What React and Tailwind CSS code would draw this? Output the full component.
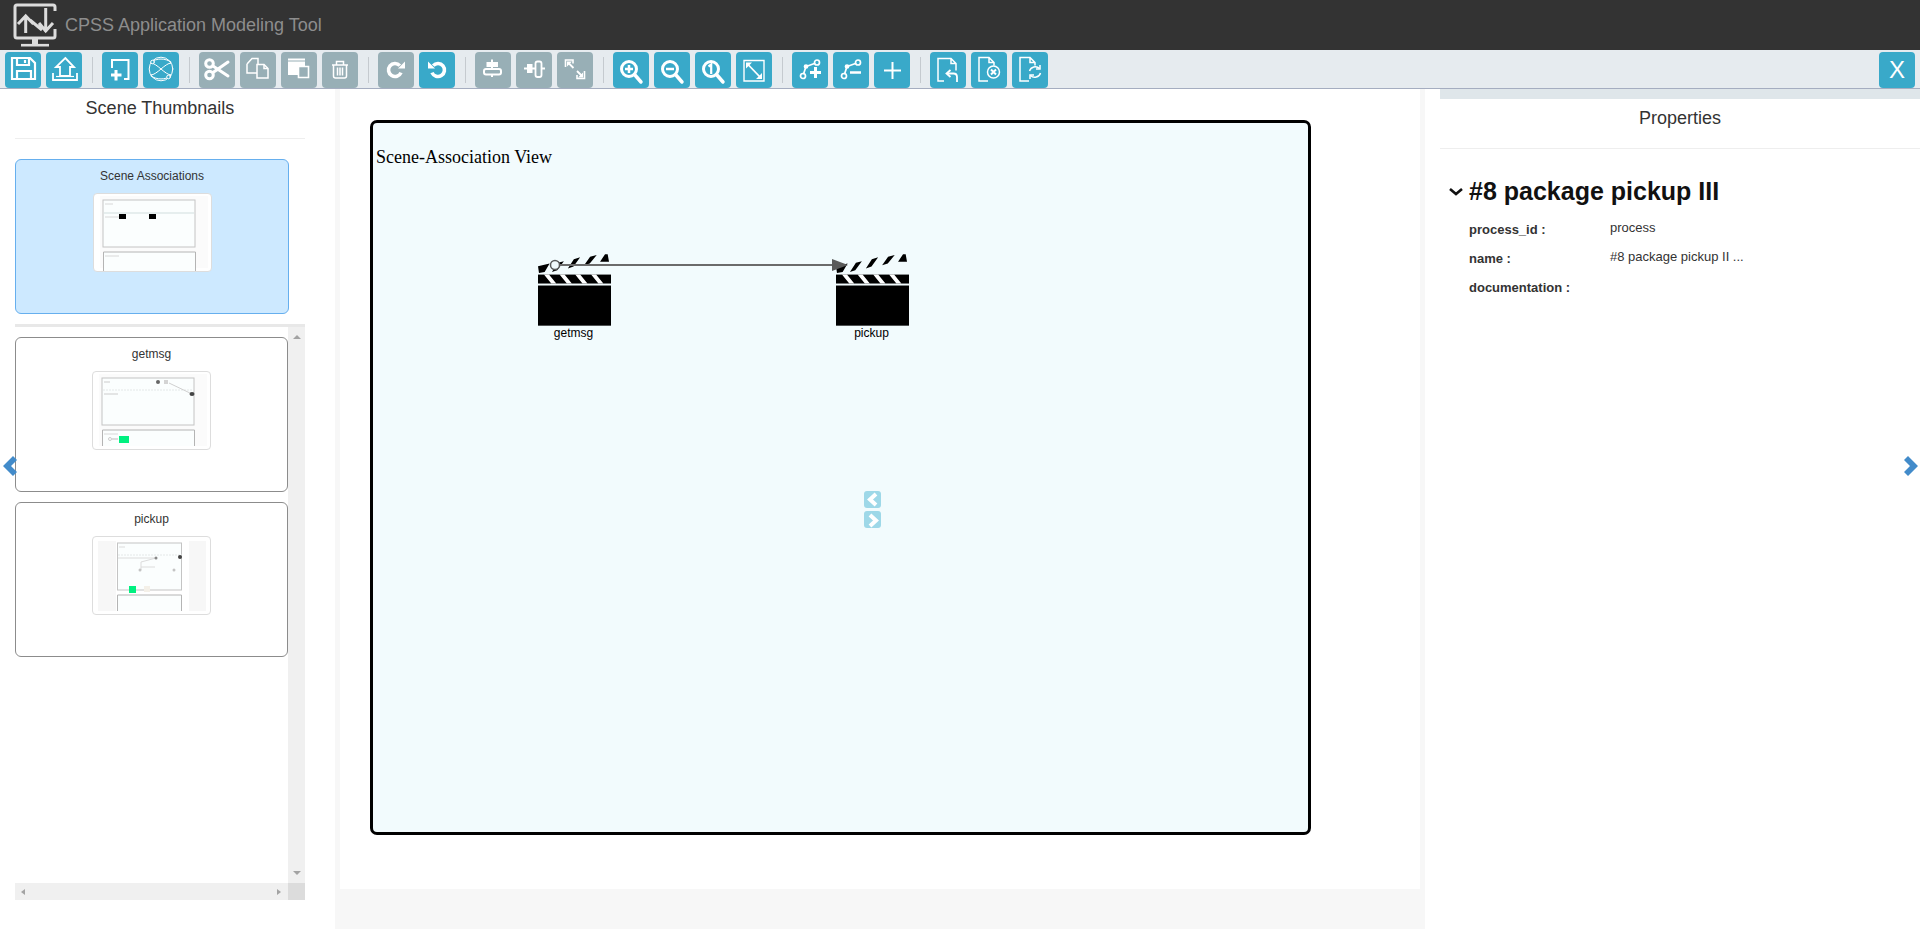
const line = { fill: "none", stroke: "#fff", strokeWidth: 2, strokeLinecap: "round", strokeLinejoin: "round" };
const sharp = { ...line, strokeLinecap: "butt", strokeLinejoin: "miter" };

const Lens = ({ children }) => (
    <g {...line} strokeWidth="3">
        <circle cx="16" cy="17" r="7.500" />
        <path d="M21.500 22.500L28 30" strokeWidth="3.500" />
        {children}
    </g>
);

// toolbar icons are drawn on a 36x36 box
const icons = {
    save: (
        <g {...sharp} strokeWidth="2.200">
            <path d="M7 6h18l5 5v16H7z" />
            <path d="M12 6v7h12V6" />
            <path d="M12 27v-8h14v8" />
            <path d="M20 8v3" />
        </g>
    ),
    upload: (
        <g {...sharp} strokeWidth="1.800">
            <path d="M19.300 6l8.700 9h-4v9H14v-9h-4z" />
            <path d="M7 21v7h24v-7" />
            <path d="M10 24.500h18" strokeWidth="1.200" />
        </g>
    ),
    addScene: (
        <g {...sharp}>
            <path d="M10 16V8h16.500v19H22" />
            <path d="M9 23h10.500M14 18v10.500" strokeWidth="3" />
        </g>
    ),
    sceneLink: (
        <g {...line} strokeWidth="1">
            <circle cx="18" cy="17" r="11.800" />
            <path d="M8 11C14 11 22 23 28 23M28 11C22 11 14 23 8 23" />
            <path d="M8 10c6-4 14-4 20 0M8 24c6 4 14 4 20 0" />
            <circle cx="9.500" cy="10" r="1.800" fill="#39a9c9" />
            <circle cx="25.500" cy="25" r="1.800" fill="#39a9c9" />
        </g>
    ),
    cut: (
        <g {...line} strokeWidth="3">
            <circle cx="10.500" cy="11.500" r="3.800" />
            <circle cx="10.500" cy="23" r="3.800" />
            <path d="M14 14l15 10M14 20.500l15-10.500" />
        </g>
    ),
    copy: (
        <g {...sharp} strokeWidth="1.500">
            <path d="M7 12l5-5.500h6V12M7 12v9h10" />
            <path d="M17 12.500h7l4 4V26H17z" />
            <path d="M24 12.500v4h4" />
        </g>
    ),
    paste: (
        <g>
            <path d="M7 6.500h17V23H7z" fill="#fff" />
            <path d="M7 9h17" stroke="#98afb6" strokeWidth="1" />
            <path d="M17.500 14.500h10v11h-10z" fill="#98afb6" stroke="#fff" strokeWidth="1.600" />
        </g>
    ),
    trash: (
        <g {...sharp} strokeWidth="1.500">
            <path d="M10 13h16M14.500 13v-3.500h7V13" />
            <path d="M11.500 13v11q0 2 2 2h9q2 0 2-2V13" />
            <path d="M15.500 15.500v8M18 15.500v8M20.500 15.500v8" />
        </g>
    ),
    redo: (
        <g>
            <path d="M21.800 13.600a6.500 6.500 0 1 0 1.200 7" {...sharp} strokeWidth="3.600" />
            <path d="M20 16.500h7V9.500z" fill="#fff" />
        </g>
    ),
    undo: (
        <g>
            <path d="M14.200 13.600a6.500 6.500 0 1 1-1.200 7" {...sharp} strokeWidth="3.600" />
            <path d="M16 16.500H9V9.500z" fill="#fff" />
        </g>
    ),
    alignH: (
        <g>
            <path d="M17 7.500V25" {...sharp} stroke="#fff" />
            <rect x="11.500" y="10" width="11.500" height="5" fill="#fff" />
            <rect x="9" y="17" width="17" height="5.500" rx="2" fill="#98afb6" stroke="#fff" strokeWidth="2" />
        </g>
    ),
    alignV: (
        <g>
            <path d="M8 16.500h21" {...sharp} />
            <rect x="11" y="12" width="5.500" height="9" fill="#fff" />
            <rect x="19.500" y="9.500" width="6" height="15.500" rx="2" fill="#98afb6" stroke="#fff" strokeWidth="1.800" />
        </g>
    ),
    resize: (
        <g {...sharp} strokeWidth="1.600">
            <path d="M8.500 15V8h7.500v3.500" />
            <path d="M27.500 19v7.500H20V23" />
            <path d="M11 10.500l5.500 5.500M25 24l-5-5" strokeWidth="1.800" />
            <path d="M10 9.500h5l-5 5zM26 25.500h-5l5-5z" fill="#fff" stroke="none" />
        </g>
    ),
    zoomIn: <Lens><path d="M12 17h8M16 13v8" strokeWidth="2.500" strokeLinecap="butt" /></Lens>,
    zoomOut: <Lens><path d="M12 17h8" strokeWidth="2.500" strokeLinecap="butt" /></Lens>,
    zoomOne: <Lens><path d="M13.500 14.500l2.700-2v9.500" strokeWidth="2.200" strokeLinecap="butt" strokeLinejoin="miter" /></Lens>,
    fit: (
        <g {...sharp}>
            <path d="M8 8.500h20v20.500H8z" strokeWidth="1.400" />
            <path d="M12 12.500l12 12.500" strokeWidth="1.800" />
            <path d="M10 10.500h6l-6 6zM26 27h-6l6-6z" fill="#fff" stroke="none" />
        </g>
    ),
    linkAdd: (
        <g {...line} strokeWidth="1.700">
            <circle cx="25" cy="10.500" r="2.500" />
            <circle cx="11" cy="24" r="2.500" />
            <path d="M22.500 11.500L15.500 14q-1.500.5-2 2l-1.800 5.500" />
            <circle cx="14" cy="14.500" r="1.500" fill="#fff" />
            <path d="M18 20.500h11M23.500 15v11" strokeWidth="3" strokeLinecap="butt" />
        </g>
    ),
    linkRemove: (
        <g {...line} strokeWidth="1.700">
            <circle cx="25" cy="10.500" r="2.500" />
            <circle cx="11" cy="24" r="2.500" />
            <path d="M22.500 11.500L15.500 14q-1.500.5-2 2l-1.800 5.500" />
            <circle cx="14" cy="14.500" r="1.500" fill="#fff" />
            <path d="M17 20.500h11" strokeWidth="2.500" strokeLinecap="butt" />
        </g>
    ),
    plus: <path d="M18.500 10v17M10 18.500h17" {...sharp} />,
    fileBack: (
        <g {...sharp} strokeWidth="1.500">
            <path d="M14 29H8V6.500h13l5 5v7M21 6.500v5h5" />
            <path d="M27 30v-5q0-3.500-3.500-3.500H17" strokeWidth="1.800" />
            <path d="M20.500 18l-4 3.500 4 3.500" strokeWidth="1.800" />
        </g>
    ),
    fileCancel: (
        <g {...sharp} strokeWidth="1.500">
            <path d="M17 29H8V5.500h10l5 5v3M18 5.500v5h5" />
            <circle cx="22.500" cy="20" r="6" />
            <path d="M20 17.500l5 5M25 17.500l-5 5" strokeWidth="2" />
        </g>
    ),
    fileSync: (
        <g {...sharp} strokeWidth="1.500">
            <path d="M17 29H8V5.500h10l5 5v3M18 5.500v5h5" />
            <path d="M17.500 19a6 6 0 0 1 10-2.500M28.500 21a6 6 0 0 1-10 2.500" />
            <path d="M28 13v4h-4M18 27v-4h4" />
        </g>
    ),
};

const toolbar = [
    [["save", 1], ["upload", 1]],
    [["addScene", 1], ["sceneLink", 1]],
    [["cut", 0], ["copy", 0], ["paste", 0], ["trash", 0]],
    [["redo", 0], ["undo", 1]],
    [["alignH", 0], ["alignV", 0], ["resize", 0]],
    [["zoomIn", 1], ["zoomOut", 1], ["zoomOne", 1], ["fit", 1]],
    [["linkAdd", 1], ["linkRemove", 1], ["plus", 1]],
    [["fileBack", 1], ["fileCancel", 1], ["fileSync", 1]],
];

const ToolButton = ({ name, active }) => (
    <button className={`${active ? "bg-[#39a9c9]" : "bg-[#98afb6]"} w-9 h-9 rounded-[4px] shrink-0`}>
        <svg width="36" height="36" viewBox="0 0 36 36">{icons[name]}</svg>
    </button>
);

const Logo = () => (
    <svg width="46" height="48" viewBox="0 0 46 48" className="ml-[12px] shrink-0" fill="none" stroke="#dcdcdc" strokeWidth="3">
        <path d="M43 10V6q0-2-2-2H5Q3 4 3 6v29q0 2 2 2h36q2 0 2-2v-7" />
        <path d="M20 38h6v5h-6z" fill="#dcdcdc" stroke="none" />
        <path d="M9 44.200h28" strokeWidth="2.600" />
        <path d="M6 23l7.700-8 7.700 8M13.700 16v16M18 19l12 10M33.700 7v24M27 22l6.700 8 7.300-8" />
    </svg>
);

const Chevron = ({ flip }) => (
    <svg width="14" height="20" viewBox="0 0 14 20" className={flip ? "rotate-180" : ""}>
        <path d="M0 10L10 0l4 4-6 6 6 6-4 4z" fill="#428bca" />
    </svg>
);

// tiny previews of the scenes
const ThumbAssoc = () => (
    <svg width="118" height="78" viewBox="0 0 118 78" className="blur-[0.5px]">
        <rect x="6" y="2" width="108" height="72" fill="#fbfbfb" />
        <rect x="9" y="6" width="92" height="47" fill="#fbfefe" stroke="#c4c4c4" />
        <path d="M10 19h90" stroke="#e6eeee" strokeWidth="2" />
        <path d="M11 10h8M11 23h14" stroke="#d8d8d8" />
        <rect x="25" y="20" width="7" height="5" fill="#000" />
        <rect x="55" y="20" width="7" height="5" fill="#000" />
        <path d="M9.500 78V58h92v20" fill="#fbfefe" stroke="#b4b4b4" />
        <path d="M11 62h14" stroke="#d8d8d8" />
    </svg>
);

const ThumbGetmsg = () => (
    <svg width="118" height="78" viewBox="0 0 118 78" className="blur-[0.5px]">
        <rect x="6" y="2" width="108" height="72" fill="#fbfbfb" />
        <rect x="9" y="6" width="92" height="47" fill="#fbfefe" stroke="#c4c4c4" />
        <path d="M10 18h90" stroke="#e4e8e8" strokeDasharray="2 1" />
        <path d="M11 10h6M11 22h14" stroke="#ccc" />
        <circle cx="65" cy="10" r="2" fill="#666" />
        <rect x="71" y="8" width="4" height="4" fill="#d4d4d4" />
        <path d="M76 11l23 11" stroke="#d0d0d0" />
        <ellipse cx="99" cy="22" rx="2.500" ry="2" fill="#444" />
        <path d="M9.500 74V58h92v16" fill="#fbfefe" stroke="#b4b4b4" />
        <path d="M11 62h14" stroke="#d8d8d8" />
        <circle cx="17" cy="67" r="1.500" fill="#fff" stroke="#ccc" />
        <path d="M19 67h6" stroke="#bbb" />
        <rect x="26" y="64" width="10" height="7" fill="#00f080" />
    </svg>
);

const ThumbPickup = () => (
    <svg width="118" height="78" viewBox="0 0 118 78" className="blur-[0.5px]">
        <rect x="5" y="4" width="108" height="70" fill="#f7f7f7" />
        <rect x="23" y="4" width="73" height="70" fill="#fff" />
        <rect x="24.500" y="6" width="64" height="47" fill="#fbfefe" stroke="#c4c4c4" />
        <path d="M25 18h64" stroke="#e4e8e8" strokeDasharray="2 1" />
        <path d="M26 10h6M25 21h38M48 33V25L63 21M48 30h14" stroke="#dcdcdc" fill="none" />
        <circle cx="63" cy="21" r="1.500" fill="#888" />
        <circle cx="87" cy="20" r="2" fill="#444" />
        <circle cx="47" cy="33" r="1.500" fill="#c4c4c4" />
        <circle cx="81" cy="33" r="1.500" fill="#c4c4c4" />
        <rect x="36" y="49" width="7" height="7" fill="#00f080" />
        <rect x="51" y="49" width="6" height="6" fill="#f4f0e8" />
        <path d="M24.500 74V58h64v16" fill="#fbfefe" stroke="#b4b4b4" />
    </svg>
);

const SceneCard = ({ title, selected, children, extra = "" }) => (
    <div className={`${selected ? "bg-[#cde9ff] border-[#66afee] w-[274px]" : "bg-white border-[#8c8c8c] w-[273px]"} h-[155px] border rounded-[6px] flex flex-col items-center ${extra}`}>
        <div className="h-[33px] leading-[32px] text-xs text-[#333] w-full text-center">{title}</div>
        <div className="w-[119px] h-[79px] bg-white border border-[#ddd] rounded-[4px] overflow-hidden">{children}</div>
    </div>
);

const Clapper = ({ label, left }) => (
    <div className="absolute top-[131px] w-[73px] flex flex-col items-center" style={{ left }}>
        <svg width="73" height="72" viewBox="0 0 220 215" className="shrink-0">
            <path d="M0 36l35-8-15 25-17 3zM42 53l18-28 18-4-20 27zM90 43l18-28 19-6-20 28zM139 33l18-26 20-5-21 26zM187 22l15-22h8l4 22z" fill="#000" />
            <rect x="0" y="61" width="220" height="27" fill="#000" />
            <path d="M18 61h15l22 27H40zM65 61h15l22 27H87zM112 61h15l22 27h-15zM160 61h15l22 27h-15z" fill="#fff" />
            <rect x="0" y="94" width="220" height="121" fill="#000" />
        </svg>
        <span className="text-xs leading-[14px] text-black pr-[2px]">{label}</span>
    </div>
);

const PropRow = ({ label, value }) => (
    <div className="flex h-[29px] text-[13px] leading-[15px] text-[#333]">
        <div className="w-[141px] font-bold pt-[2px]">{label}</div>
        <div>{value}</div>
    </div>
);

const Triangle = ({ d, className = "" }) => (
    <svg width="8" height="6" viewBox="0 0 8 6" className={className}><path d={d} fill="#a3a3a3" /></svg>
);

export default function App() {
    return (
        <div className="h-screen w-full overflow-hidden bg-white flex flex-col relative font-['Liberation_Sans',Arial,sans-serif] text-[#333]">
            {/* title bar */}
            <div className="h-[50px] bg-[#333] flex items-center shrink-0">
                <Logo />
                <span className="ml-[7px] text-lg text-[#8d8d8d]">CPSS Application Modeling Tool</span>
            </div>

            {/* toolbar */}
            <div className="h-[39px] bg-[#e6ebef] border-b border-[#a5adc0] flex pt-[2px] pl-[5px] pr-[5px] shrink-0">
                {toolbar.map((group, i) => (
                    <div key={i} className="flex items-start">
                        {i > 0 && <div className="w-px h-[26px] bg-[#c5cacf] mt-[5px] ml-[10px] mr-[9px]"></div>}
                        <div className="flex gap-[5px]">
                            {group.map(([name, active]) => <ToolButton key={name} name={name} active={active} />)}
                        </div>
                    </div>
                ))}
                <button className="ml-auto w-9 h-9 rounded-[4px] bg-[#39a9c9] text-white text-2xl leading-9">X</button>
            </div>

            <div className="flex flex-1 min-h-0">
                {/* scene list */}
                <div className="w-[335px] shrink-0 pl-[15px] pr-[30px]">
                    <div className="h-[38px] leading-[38px] text-lg text-center">Scene Thumbnails</div>
                    <div className="h-px bg-[#eee] mt-[11px]"></div>
                    <SceneCard title="Scene Associations" selected extra="mt-[20px]"><ThumbAssoc /></SceneCard>
                    <div className="h-[3px] bg-[#e8e8e8] mt-[10px]"></div>
                    <div className="h-[573px] flex flex-col">
                        <div className="flex flex-1 min-h-0">
                            <div className="flex-1 pt-[10px] flex flex-col gap-[10px]">
                                <SceneCard title="getmsg"><ThumbGetmsg /></SceneCard>
                                <SceneCard title="pickup"><ThumbPickup /></SceneCard>
                            </div>
                            <div className="w-[17px] bg-[#f0f0f0] flex flex-col items-center justify-between py-[7px]">
                                <Triangle d="M4 1l4 4H0z" />
                                <Triangle d="M0 1h8L4 5z" />
                            </div>
                        </div>
                        <div className="h-[17px] bg-[#f0f0f0] flex shrink-0">
                            <div className="flex-1 flex items-center justify-between px-[5px]">
                                <Triangle d="M5 0v6L1 3z" />
                                <Triangle d="M2 0v6l4-3z" />
                            </div>
                            <div className="w-[17px] bg-[#dcdcdc]"></div>
                        </div>
                    </div>
                </div>

                {/* canvas column */}
                <div className="w-[1090px] shrink-0 bg-[#f7f7f7] px-[5px]">
                    <div className="h-[800px] bg-white pt-[31px] pl-[30px]">
                        <div className="relative w-[941px] h-[715px] bg-[#f2fbfd] border-[3px] border-black rounded-[7px]">
                            <div className="pl-[3px] pt-[24px] text-lg leading-5 text-black font-['Liberation_Serif',serif]">Scene-Association View</div>
                            <Clapper label="getmsg" left={165} />
                            <Clapper label="pickup" left={463} />
                            <svg className="absolute left-0 top-0" width="935" height="709" viewBox="0 0 935 709">
                                <path d="M182 142h280" stroke="#6b6b6b" strokeWidth="2" />
                                <path d="M459 136l16 6-16 6z" fill="#5a5a5a" />
                                <circle cx="182" cy="142" r="4.500" fill="#f2fbfd" stroke="#5a5a5a" strokeWidth="1.500" />
                            </svg>
                            <div className="absolute left-[491px] top-[368px] flex flex-col gap-[3px]">
                                <div className="w-[17px] h-[17px] rounded-[3px] bg-[#9ed8e8]">
                                    <svg width="17" height="17" viewBox="0 0 17 17"><path d="M12 3L6 8.500l6 5.500" fill="none" stroke="#fff" strokeWidth="4" /></svg>
                                </div>
                                <div className="w-[17px] h-[17px] rounded-[3px] bg-[#9ed8e8]">
                                    <svg width="17" height="17" viewBox="0 0 17 17"><path d="M6 4l6 5.500L6 15" fill="none" stroke="#fff" strokeWidth="4" /></svg>
                                </div>
                            </div>
                        </div>
                    </div>
                </div>

                {/* properties */}
                <div className="flex-1 min-w-0 pl-[15px]">
                    <div className="h-[10px] bg-[#dfe6ea]"></div>
                    <div className="h-[38px] leading-[38px] text-lg text-center">Properties</div>
                    <div className="h-px bg-[#eee] mt-[11px]"></div>
                    <div className="flex items-center mt-[29px] h-[28px]">
                        <svg width="29" height="10" viewBox="0 0 29 10" className="shrink-0">
                            <path d="M10 2l6 5 6-5" fill="none" stroke="#111" strokeWidth="2.600" />
                        </svg>
                        <h2 className="text-[25px] font-bold text-[#111] whitespace-nowrap">#8 package pickup III</h2>
                    </div>
                    <div className="pl-[29px] mt-[14px]">
                        <PropRow label="process_id :" value="process" />
                        <PropRow label="name :" value="#8 package pickup II ..." />
                        <PropRow label="documentation :" value="" />
                    </div>
                </div>
            </div>

            {/* side toggles */}
            <div className="absolute left-[3px] top-[456px]"><Chevron /></div>
            <div className="absolute left-[1904px] top-[456px]"><Chevron flip /></div>
        </div>
    );
}
